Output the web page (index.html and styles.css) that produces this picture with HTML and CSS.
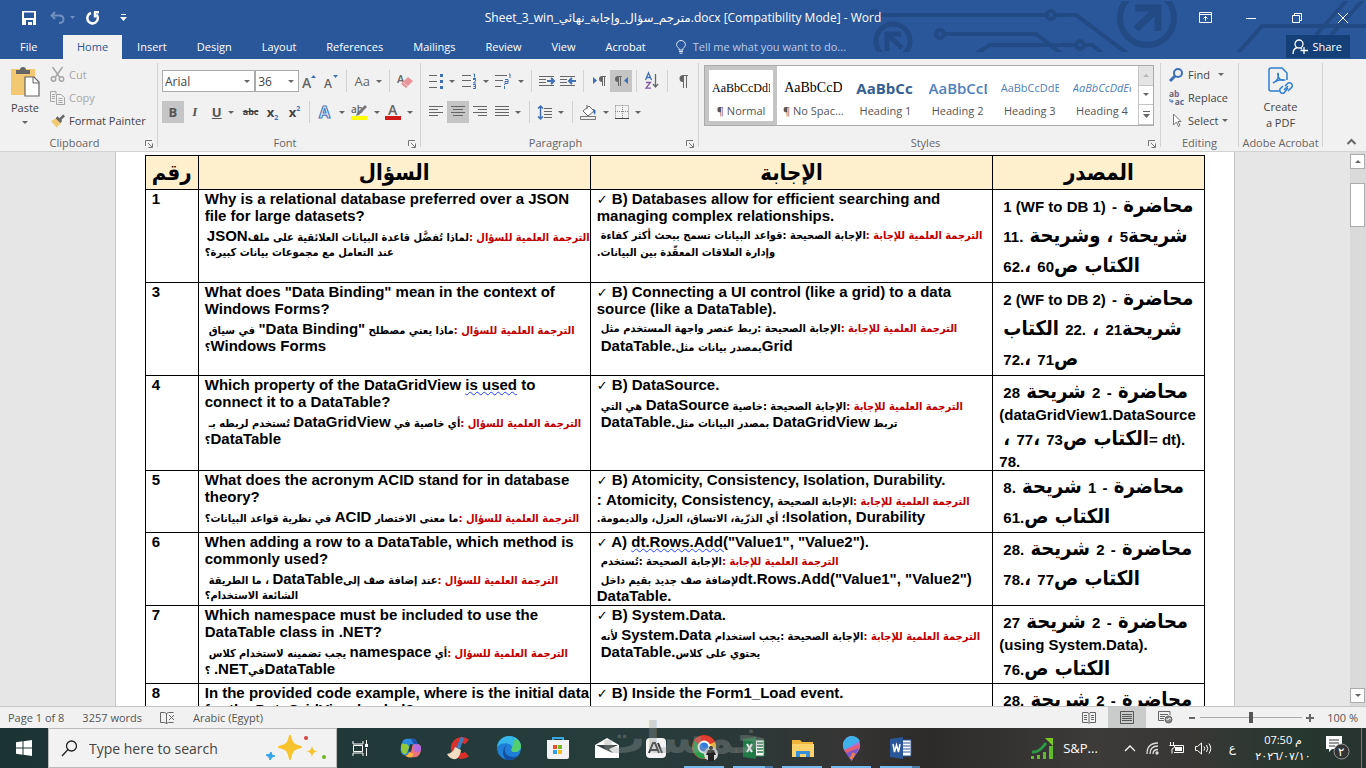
FILE: index.html
```html
<!DOCTYPE html>
<html lang="en">
<head>
<meta charset="utf-8">
<title>Word</title>
<link rel="stylesheet" href="styles.css">
</head>
<body>
<header class="top">
  <svg class="circuit" width="496" height="59" viewBox="870 0 496 59" fill="none" stroke="#224a85" stroke-width="4">
    <g clip-path="url(#band)">
      <circle cx="874" cy="15" r="4"/><path d="M878 15H1047M1055 15H1076L1128 54"/><circle cx="1051" cy="15" r="4"/>
      <circle cx="940" cy="34" r="4"/><path d="M944 34H1036L1062 54M974 55L990 45H1076"/><circle cx="1080" cy="45" r="4"/><path d="M1084 45H1092L1102 53"/>
      <circle cx="1147" cy="18" r="27" stroke-width="6"/><path d="M1135 8H1158V31M1157 9L1136 29" stroke-width="7"/>
      <circle cx="893" cy="41" r="17" stroke-width="5"/><path d="M887 51V34H901M887 34L902 48" stroke-width="5"/>
      <path d="M1238 53L1262 26H1366M1316 35L1347 0M1331 35L1363 0"/>
    </g>
    <clipPath id="band"><rect x="870" y="1" width="496" height="51"/></clipPath>
  </svg>
  <div class="titlebar">
    <div class="qat">
      <button aria-label="Save"><svg width="14" height="14" viewBox="0 0 14 14"><path d="M0 0h14v14H0z" fill="#fff"/><path d="M2 1.500h10V7H2zM4 9h7v5h-1v-3H6v3H4z" fill="#2a579a"/></svg></button>
      <button aria-label="Undo"><svg width="26" height="14" viewBox="0 0 26 14" fill="none" stroke="#6f8fc0" stroke-width="2"><path d="M5 1L1.500 4.500L5 8M2 4.500H9C15 4.500 15 12 9 12"/><path d="M20 5h5l-2.500 3z" fill="#6f8fc0" stroke="none"/></svg></button>
      <button aria-label="Redo"><svg width="14" height="14" viewBox="0 0 14 14" fill="none" stroke="#fff" stroke-width="2.500"><path d="M5 2A5.300 5.300 0 1 0 10.500 3.500"/><path d="M8 1.200h5M9 1v5.500"/></svg></button>
      <button aria-label="Customize"><svg width="7" height="8" viewBox="0 0 7 8" fill="#fff"><path d="M1 0h5v1H1zM0 3h7L3.500 7z"/></svg></button>
    </div>
    <h1>Sheet_3_win_مترجم_سؤال_وإجابة_نهائي.docx [Compatibility Mode] - Word</h1>
    <div class="winctl">
      <button aria-label="Ribbon options"><svg width="13" height="11" viewBox="0 0 13 11" fill="none" stroke="#fff"><path d="M.5.5h12v10H.5zM.5 2.500h12M6.500 9V4.500M4.500 6.500l2-2l2 2"/></svg></button>
      <button aria-label="Minimize"><svg width="10" height="10" viewBox="0 0 10 10" stroke="#fff"><path d="M0 5.500h10"/></svg></button>
      <button aria-label="Restore"><svg width="10" height="10" viewBox="0 0 10 10" fill="none" stroke="#fff"><path d="M.5 2.500h7v7h-7zM2.500 2V.5h7v7H8"/></svg></button>
      <button aria-label="Close"><svg width="10" height="10" viewBox="0 0 10 10" stroke="#fff"><path d="M0 0l10 10M10 0L0 10"/></svg></button>
    </div>
  </div>
  <nav class="tabs">
    <button class="file">File</button><button class="on">Home</button><button>Insert</button><button>Design</button><button>Layout</button><button>References</button><button>Mailings</button><button>Review</button><button>View</button><button>Acrobat</button>
    <button class="tell"><svg width="10" height="14" viewBox="0 0 10 14" fill="none" stroke="#dfe8f5"><path d="M3 10V8.500C1.500 7 .6 6 .6 4.600a4.400 4.100 0 0 1 8.800 0C9.400 6 8.500 7 7 8.500V10zM3 11.500h4M3.500 13.200h3"/></svg>Tell me what you want to do...</button>
    <button class="share"><svg width="16" height="16" viewBox="0 0 16 16" fill="none" stroke="#fff" stroke-width="1.300"><circle cx="7" cy="5" r="4"/><path d="M1 15c0-4 2-6 4.500-6.500M8.500 9L10 10M12 8v7M8.500 11.500H16"/></svg>Share</button>
  </nav>
</header>

<section class="ribbon">
  <div class="group g-clip">
    <div class="body">
      <button class="big"><svg width="30" height="32" viewBox="0 0 30 32"><path d="M1 3h24v26H1z" fill="#f3c873"/><path d="M6 8V4h4a3 3 0 0 1 6 0h4v4z" fill="#666"/><path d="M15 11h9l5 5v14H15z" fill="#fff" stroke="#666" stroke-width="1.200"/><path d="M23 11v6h6" fill="none" stroke="#666"/></svg>Paste<i class="arr"></i></button>
      <div class="stack">
        <button class="off"><svg width="14" height="15" viewBox="0 0 14 15" fill="none" stroke="#a6a6a6" stroke-width="1.500"><path d="M2 0l7 10M12 0L5 10"/><circle cx="3" cy="12" r="2.200"/><circle cx="11" cy="12" r="2.200"/></svg>Cut</button>
        <button class="off"><svg width="15" height="14" viewBox="0 0 15 14" fill="none" stroke="#a6a6a6"><path d="M6 3.500V.5H.5v10H5M2 3.500h3M2 5.500h3M2 7.500h3M6.500 3.500H11l3.500 3v7h-8zM8.500 7.500h4M8.500 9.500h4M8.500 11.500h4"/></svg>Copy</button>
        <button><svg width="16" height="14" viewBox="0 0 16 14"><path d="M1 7l6-3l5 5l-5 5z" fill="#f3c873"/><path d="M6 4l2-2l5 5l-2 2zM10 4l4-4l2 2l-4 4z" fill="#666"/></svg>Format Painter</button>
      </div>
    </div>
    <div class="label">Clipboard<svg class="launch" viewBox="0 0 8 8"><path d="M.5 6V.5H7M3 3l4 4M7.500 3.500v4h-4" /></svg></div>
  </div>

  <div class="group g-font">
    <div class="body rows">
      <div class="row">
        <span class="combo face"><select aria-label="Font"><option>Arial</option></select><i class="arr"></i></span><span class="combo size"><select aria-label="Font size"><option>36</option></select><i class="arr"></i></span>
        <button class="t" aria-label="Grow font"><svg width="15" height="15" viewBox="0 0 15 15"><text x="0" y="14" class="gl" font-size="14">A</text><path d="M9 4h5l-2.500-3z" fill="#3f6fb5"/></svg></button>
        <button class="t" aria-label="Shrink font"><svg width="15" height="15" viewBox="0 0 15 15"><text x="0" y="14" class="gl" font-size="12">A</text><path d="M9 1h5l-2.500 3z" fill="#3f6fb5"/></svg></button>
        <i class="sep"></i><button class="t dd txt">Aa<i class="arr"></i></button><i class="sep"></i>
        <button class="t" aria-label="Clear formatting"><svg width="16" height="16" viewBox="0 0 16 16"><text x="0" y="10" class="gl" font-size="11">A</text><path d="M4 11l7-7l5 4l-7 7z" fill="#e8929a"/><path d="M6 9l5 4.500" stroke="#f6d5d8"/></svg></button>
      </div>
      <div class="row">
        <button class="t act"><b>B</b></button><button class="t"><em>I</em></button><button class="t dd"><u>U</u><i class="arr"></i></button><button class="t strike">abc</button><button class="t sc">x<sub>2</sub></button><button class="t sc">x<sup>2</sup></button>
        <i class="sep"></i>
        <button class="t dd" aria-label="Text effects"><svg width="15" height="15" viewBox="0 0 15 15"><text x="1" y="13" font-family="Open Sans" font-weight="bold" font-size="16" fill="#fff" stroke="#4d7fc4" stroke-width="1.200">A</text></svg><i class="arr"></i></button>
        <button class="t dd" aria-label="Highlight"><svg width="17" height="16" viewBox="0 0 17 16"><text x="0" y="9" class="gl" font-size="10">ab</text><path d="M14 1l2 2l-8 8l-3 1l1-3z" fill="#777"/><path d="M0 12h16v4H0z" fill="#ff0"/></svg><i class="arr"></i></button>
        <button class="t dd" aria-label="Font color"><svg width="16" height="16" viewBox="0 0 16 16"><text x="3" y="11" class="gl" font-size="14">A</text><path d="M0 12h16v4H0z" fill="#d11a1a"/></svg><i class="arr"></i></button>
      </div>
    </div>
    <div class="label">Font<svg class="launch" viewBox="0 0 8 8"><path d="M.5 6V.5H7M3 3l4 4M7.500 3.500v4h-4" /></svg></div>
  </div>

  <div class="group g-para">
    <div class="body rows">
      <div class="row">
        <button class="t dd" aria-label="Bullets"><svg width="14" height="15" viewBox="0 0 14 15"><path d="M0 1.500h8M0 7.500h8M0 13.500h8" stroke="#666"/><path d="M11 0h3v3h-3zM11 6h3v3h-3zM11 12h3v3h-3z" fill="#3f6fb5"/></svg><i class="arr"></i></button>
        <button class="t dd" aria-label="Numbering"><svg width="15" height="16" viewBox="0 0 15 16"><path d="M0 2.500h9M0 7.500h9M0 13.500h9" stroke="#666"/><path d="M11.500 1h1v3.500M11 5.500h3M11 6.500h2.500v1.500l-2 2h2.500M11 11.500h2.500v4H11M11.500 13.500h2" fill="none" stroke="#3f6fb5"/></svg><i class="arr"></i></button>
        <button class="t dd" aria-label="Multilevel list"><svg width="17" height="16" viewBox="0 0 17 16"><path d="M0 2.500h12M0 7.500h8M0 13.500h6" stroke="#666"/><path d="M14 1h1v4M10 6.500h3v4h-3v-2h3M9.500 11v1M9.500 13v3" fill="none" stroke="#3f6fb5"/></svg><i class="arr"></i></button>
        <i class="sep"></i>
        <button class="t" aria-label="Decrease indent"><svg width="16" height="11" viewBox="0 0 16 11" fill="none" stroke="#666"><path d="M0 .5h15M0 3.500h7M0 6.500h7M0 9.500h15"/><path d="M8 5h7M12 2l3 3l-3 3" stroke="#3f6fb5" stroke-width="2"/></svg></button>
        <button class="t" aria-label="Increase indent"><svg width="16" height="11" viewBox="0 0 16 11" fill="none" stroke="#666"><path d="M0 .5h15M0 3.500h7M0 6.500h7M0 9.500h15"/><path d="M16 5H9M12 2L9 5l3 3" stroke="#3f6fb5" stroke-width="2"/></svg></button>
        <i class="sep"></i>
        <button class="t" aria-label="Left to right"><svg width="13" height="10" viewBox="0 0 13 10"><path d="M0 1v7l4-3.500z" fill="#3f6fb5"/><path d="M13 0v1h-1v9h-1V1h-1v9H9V6a3 3 0 0 1 0-6z" fill="#666"/></svg></button>
        <button class="t act" aria-label="Right to left"><svg width="13" height="10" viewBox="0 0 13 10"><path d="M13 1v7L9 4.500z" fill="#3f6fb5"/><path d="M7 0v1H6v9H5V1H4v9H3V6a3 3 0 0 1 0-6z" fill="#666"/></svg></button>
        <i class="sep"></i>
        <button class="t" aria-label="Sort"><svg width="14" height="16" viewBox="0 0 14 16" fill="none" stroke-width="1.300"><path d="M.5 7L3.500 0L6.500 7M1.500 4.500h4" stroke="#3f6fb5"/><path d="M1 9.500h4.500L1 15.200h5" stroke="#80599e"/><path d="M10.500 1v13M8 11l2.500 3l2.500-3" stroke="#666"/></svg></button>
        <i class="sep"></i>
        <button class="t" aria-label="Show marks"><svg width="10" height="13" viewBox="0 0 10 13" fill="#666"><path d="M10 0v1H9v12H8V1H6v12H5V7a3.500 3.500 0 0 1 0-7z"/></svg></button>
      </div>
      <div class="row">
        <button class="t" aria-label="Align left"><svg width="14" height="12" viewBox="0 0 14 12" stroke="#666"><path d="M0 .5h14M0 3.500h9M0 6.500h14M0 9.500h9"/></svg></button>
        <button class="t act" aria-label="Center"><svg width="14" height="12" viewBox="0 0 14 12" stroke="#666"><path d="M0 .5h14M2 3.500h10M0 6.500h14M2 9.500h10"/></svg></button>
        <button class="t" aria-label="Align right"><svg width="14" height="12" viewBox="0 0 14 12" stroke="#666"><path d="M0 .5h14M5 3.500h9M0 6.500h14M5 9.500h9"/></svg></button>
        <button class="t dd" aria-label="Justify"><svg width="14" height="12" viewBox="0 0 14 12" stroke="#666"><path d="M0 .5h14M0 3.500h14M0 6.500h14M0 9.500h14"/></svg><i class="arr"></i></button>
        <i class="sep"></i>
        <button class="t dd" aria-label="Line spacing"><svg width="14" height="15" viewBox="0 0 14 15" fill="none" stroke="#666"><path d="M6 3.500h8M6 6.500h8M6 9.500h8M6 12.500h8"/><path d="M2.500 1v13M0 3.500L2.500 1L5 3.500M0 11.500L2.500 14L5 11.500" stroke="#3f6fb5" stroke-width="1.500"/></svg><i class="arr"></i></button>
        <i class="sep"></i>
        <button class="t dd" aria-label="Shading"><svg width="17" height="16" viewBox="0 0 17 16"><path d="M3 7l6-5l5 5l-6 5zM7 5V1" fill="#fff" stroke="#666"/><path d="M13 5c3 0 3 3 2 6c-1-2-2-2-2-6z" fill="#3f6fb5"/><path d="M.5 12.500h15v3H.5z" fill="#eee" stroke="#777"/></svg><i class="arr"></i></button>
        <button class="t dd" aria-label="Borders"><svg width="14" height="14" viewBox="0 0 14 14" fill="none" stroke="#888" stroke-dasharray="1 1"><path d="M.5.5h13v13M.5.5v13M7.500 0v13M0 6.500h13"/><path d="M0 13.500h14" stroke="#444" stroke-dasharray="none"/></svg><i class="arr"></i></button>
      </div>
    </div>
    <div class="label">Paragraph<svg class="launch" viewBox="0 0 8 8"><path d="M.5 6V.5H7M3 3l4 4M7.500 3.500v4h-4" /></svg></div>
  </div>

  <div class="group g-styles">
    <div class="gallery">
      <button class="style sel"><span class="pv serif">AaBbCcDdI</span><span>¶ Normal</span></button>
      <button class="style"><span class="pv serif lg">AaBbCcD</span><span>¶ No Spac...</span></button>
      <button class="style"><span class="pv h1">AaBbCc</span><span>Heading 1</span></button>
      <button class="style"><span class="pv h2">AaBbCcD</span><span>Heading 2</span></button>
      <button class="style"><span class="pv h3">AaBbCcDdEe</span><span>Heading 3</span></button>
      <button class="style"><span class="pv h3 it">AaBbCcDdEe</span><span>Heading 4</span></button>
      <div class="scroller"><button class="off" aria-label="Up"><i class="arr up"></i></button><button aria-label="Down"><i class="arr"></i></button><button aria-label="More"><svg width="7" height="7" viewBox="0 0 7 7" fill="#666"><path d="M0 0h7v1H0zM0 3h7L3.500 7z"/></svg></button></div>
    </div>
    <div class="label">Styles<svg class="launch" viewBox="0 0 8 8"><path d="M.5 6V.5H7M3 3l4 4M7.500 3.500v4h-4" /></svg></div>
  </div>

  <div class="group g-edit">
    <div class="stack">
      <button><svg width="15" height="14" viewBox="0 0 15 14" fill="none" stroke="#3f6fb5" stroke-width="2"><circle cx="9" cy="5" r="4"/><path d="M6 8l-5 5" stroke-width="3"/></svg>Find<i class="arr wide"></i></button>
      <button><svg width="16" height="16" viewBox="0 0 16 16" font-family="Open Sans" font-weight="bold" font-size="9"><text x="0" y="7" fill="#666">a<tspan fill="#80599e">b</tspan></text><text x="6" y="15" fill="#666">a<tspan fill="#3f6fb5">c</tspan></text><path d="M1 9v2.500h3M2.500 10l2 1.500l-2 2" fill="none" stroke="#3f6fb5"/></svg>Replace</button>
      <button><svg width="15" height="15" viewBox="0 0 15 15" fill="#fff" stroke="#777"><path d="M4.500 1v11l3-3l2 4.500l1.500-1L9 8.500h3z"/></svg>Select<i class="arr"></i></button>
    </div>
    <div class="label">Editing</div>
  </div>

  <div class="group g-acro">
    <button class="big"><svg width="26" height="30" viewBox="0 0 26 30" fill="none" stroke="#2f7fd1" stroke-width="1.500"><path d="M11 24H3a2 2 0 0 1-2-2V3a2 2 0 0 1 2-2h11l5 5v7M5 16c4-2 6-6 5-10c-1 5 3 8 6 7c-3-1-8 1-11 3z"/><path d="M17 19l3-3a3 3 0 0 1 4 4l-4 4M20 21l-4 5a3 3 0 0 1-4-4l3-3M16 23l4-4"/></svg>Create<br>a PDF</button>
    <div class="label">Adobe Acrobat</div>
  </div>
  <button class="collapse" aria-label="Collapse ribbon"><svg width="9" height="6" viewBox="0 0 9 6" fill="none" stroke="#666" stroke-width="2"><path d="M.5 5l4-4l4 4"/></svg></button>
</section>

<main class="desk">
  <div class="canvas">
  <div class="page">
    <table>
      <colgroup><col class="c1"><col class="c2"><col class="c3"><col class="c4"></colgroup>
      <thead><tr><th>رقم</th><th>السؤال</th><th>الإجابة</th><th>المصدر</th></tr></thead>
      <tbody>
      <tr class="r93"><td>1</td>
        <td>Why is a relational database preferred over a JSON<br>file for large datasets?
          <p class="ar in"><span>الترجمة العلمية للسؤال :</span>لماذا تُفضَّل قاعدة البيانات العلائقية على ملف<b dir="ltr">JSON</b></p><p class="ar">عند التعامل مع مجموعات بيانات كبيرة؟</p></td>
        <td><i class="ck">✓</i> B) Databases allow for efficient searching and<br>managing complex relationships.
          <p class="ar in"><span>الترجمة العلمية للإجابة :</span>الإجابة الصحيحة :قواعد البيانات تسمح ببحث أكثر كفاءة</p><p class="ar">وإدارة العلاقات المعقّدة بين البيانات.</p></td>
        <td class="src"><p>محاضرة <b>-</b> <b dir="ltr">1 (WF to DB 1)</b></p><p>شريحة<b>5</b> ، وشريحة <b dir="ltr">11.</b></p><p>الكتاب ص<b>60</b> ،<b dir="ltr">62.</b></p></td></tr>
      <tr class="r93"><td>3</td>
        <td>What does "Data Binding" mean in the context of<br>Windows Forms?
          <p class="ar in"><span>الترجمة العلمية للسؤال :</span>ماذا يعني مصطلح <b dir="ltr">"Data Binding"</b> في سياق</p><p class="ar"><b dir="ltr">Windows Forms</b>؟</p></td>
        <td><i class="ck">✓</i> B) Connecting a UI control (like a grid) to a data<br>source (like a DataTable).
          <p class="ar in"><span>الترجمة العلمية للإجابة :</span>الإجابة الصحيحة :ربط عنصر واجهة المستخدم مثل</p><p class="ar in"><b dir="ltr">Grid</b>بمصدر بيانات مثل<b dir="ltr">DataTable.</b></p></td>
        <td class="src"><p>محاضرة <b>-</b> <b dir="ltr">2 (WF to DB 2)</b></p><p>شريحة<b>21</b> ، <b dir="ltr">22.</b> الكتاب</p><p>ص<b>71</b> ،<b dir="ltr">72.</b></p></td></tr>
      <tr class="r95"><td>4</td>
        <td>Which property of the DataGridView <span class="wavy">is used</span> to<br>connect it to a DataTable?
          <p class="ar in"><span>الترجمة العلمية للسؤال :</span>أي خاصية في <b dir="ltr">DataGridView</b> تُستخدم لربطه بـ</p><p class="ar"><b dir="ltr">DataTable</b>؟</p></td>
        <td><i class="ck">✓</i> B) DataSource.
          <p class="ar in"><span>الترجمة العلمية للإجابة :</span>الإجابة الصحيحة :خاصية <b dir="ltr">DataSource</b> هي التي</p><p class="ar in">تربط <b dir="ltr">DataGridView</b> بمصدر البيانات مثل<b dir="ltr">DataTable.</b></p></td>
        <td class="src"><p>محاضرة <b>-</b> <b>2</b> شريحة <b>28</b></p>(dataGridView1.DataSource<p><b dir="ltr">= dt).</b>الكتاب ص<b>73</b> ،<b>77</b> ،</p>78.</td></tr>
      <tr class="r62"><td>5</td>
        <td>What does the acronym ACID stand for in database<br>theory?
          <p class="ar"><span>الترجمة العلمية للسؤال :</span>ما معنى الاختصار <b dir="ltr">ACID</b> في نظرية قواعد البيانات؟</p></td>
        <td><i class="ck">✓</i> B) Atomicity, Consistency, Isolation, Durability.
          <p class="ar"><span>الترجمة العلمية للإجابة :</span>الإجابة الصحيحة <b dir="ltr">: Atomicity, Consistency,</b></p><p class="ar"><b dir="ltr">Isolation, Durability</b>؛ أي الذرّية، الاتساق، العزل، والديمومة.</p></td>
        <td class="src"><p>محاضرة <b>-</b> <b>1</b> شريحة <b dir="ltr">8.</b></p><p>الكتاب ص<b dir="ltr">61.</b></p></td></tr>
      <tr class="r73"><td>6</td>
        <td>When adding a row to a DataTable, which method is<br>commonly used?
          <p class="ar in"><span>الترجمة العلمية للسؤال :</span>عند إضافة صف إلى<b dir="ltr">DataTable</b> ، ما الطريقة</p><p class="ar">الشائعة الاستخدام؟</p></td>
        <td><i class="ck">✓</i> A) <span class="wavy">dt.Rows.Add(</span>"Value1", "Value2").
          <p class="ar in"><span>الترجمة العلمية للإجابة :</span>الإجابة الصحيحة :تُستخدم</p><p class="ar in"><b dir="ltr">dt.Rows.Add("Value1", "Value2")</b>لإضافة صف جديد بقيم داخل</p>DataTable.</td>
        <td class="src"><p>محاضرة <b>-</b> <b>2</b> شريحة <b dir="ltr">28.</b></p><p>الكتاب ص<b>77</b> ،<b dir="ltr">78.</b></p></td></tr>
      <tr class="r78"><td>7</td>
        <td>Which namespace must be included to use the<br>DataTable class in .NET?
          <p class="ar in"><span>الترجمة العلمية للسؤال :</span>أي <b dir="ltr">namespace</b> يجب تضمينه لاستخدام كلاس</p><p class="ar"><b dir="ltr">DataTable</b>في<b dir="ltr">.NET</b> ؟</p></td>
        <td><i class="ck">✓</i> B) System.Data.
          <p class="ar in"><span>الترجمة العلمية للإجابة :</span>الإجابة الصحيحة :يجب استخدام <b dir="ltr">System.Data</b> لأنه</p><p class="ar in">يحتوي على كلاس<b dir="ltr">DataTable.</b></p></td>
        <td class="src"><p>محاضرة <b>-</b> <b>2</b> شريحة <b>27</b></p>(using System.Data).<p>الكتاب ص<b dir="ltr">76.</b></p></td></tr>
      <tr class="r93"><td>8</td>
        <td>In the provided code example, where is the initial data<br>for the DataGridView loaded?</td>
        <td><i class="ck">✓</i> B) Inside the Form1_Load event.</td>
        <td class="src"><p>محاضرة <b>-</b> <b>2</b> شريحة <b dir="ltr">28.</b></p></td></tr>
      </tbody>
    </table>
  </div>
  </div>
  <div class="vbar"><button aria-label="Scroll up"><i class="arr up"></i></button><div class="thumb"></div><button aria-label="Scroll down"><i class="arr"></i></button></div>
</main>

<footer class="status">
  <span>Page 1 of 8</span><span>3257 words</span>
  <svg width="15" height="13" viewBox="0 0 15 13" fill="none" stroke="#666"><path d="M.5 1.500h4l2 1v10l-2-1h-4zM6.500 2.500l2-1h5M6.500 12.500l2-1h5M9 4l5 5M14 4L9 9" /></svg>
  <span>Arabic (Egypt)</span>
  <div class="view">
    <button aria-label="Read mode"><svg width="14" height="12" viewBox="0 0 14 12" fill="none" stroke="#666"><path d="M.5.5H6l1 1l1-1h5.500v10H8l-1 1l-1-1H.5zM7 1v10M2 3.500h3M2 5.500h3M2 7.500h3M9 3.500h3M9 5.500h3M9 7.500h3"/></svg></button>
    <button class="on" aria-label="Print layout"><svg width="14" height="13" viewBox="0 0 14 13" fill="none" stroke="#555"><path d="M.5.500h13v12H.5zM2 3.500h10M2 5.500h10M2 7.500h10M2 9.500h10"/></svg></button>
    <button aria-label="Web layout"><svg width="15" height="13" viewBox="0 0 15 13" fill="none" stroke="#666"><path d="M12 4V.5H.5v9H6M2 3.500h8M2 5.500h5M2 7.500h4"/><circle cx="10.500" cy="8.500" r="3.500" fill="#888"/><path d="M8 8l2 1l1-2l2 1" stroke="#eee"/></svg></button>
  </div>
  <button class="zb" aria-label="Zoom out"><svg width="6" height="8"><path d="M0 4h6" stroke="#666" stroke-width="2"/></svg></button>
  <input type="range" min="10" max="190" value="100" aria-label="Zoom">
  <button class="zb" aria-label="Zoom in"><svg width="8" height="8"><path d="M0 4h8M4 0v8" stroke="#666" stroke-width="2"/></svg></button>
  <span class="pct">100 %</span>
</footer>

<footer class="taskbar">
  <button class="start" aria-label="Start"><svg width="16" height="16" viewBox="0 0 16 16" fill="#fff"><path d="M0 2.200L6.500 1.300V7.500H0zM7.500 1.200L16 0V7.500H7.500zM0 8.500H6.500V14.700L0 13.800zM7.500 8.500H16V16L7.500 14.800z"/></svg></button>
  <label class="search"><svg width="17" height="17" viewBox="0 0 17 17" fill="none" stroke="#222" stroke-width="1.300"><circle cx="10.500" cy="6" r="5"/><path d="M7 9.500L1 16"/></svg><input type="text" placeholder="Type here to search" aria-label="Search">
    <svg width="62" height="26" viewBox="0 0 62 26"><path d="M24 1c2 8 3 9 11 11c-8 2-9 3-11 12c-2-9-3-10-11-12c8-2 9-3 11-11z" fill="#f7c32e" stroke="#f7c32e" stroke-width="2" stroke-linejoin="round"/><path d="M46 11c1 4 2 5 6 5c-4 1-5 2-6 6c-1-4-2-5-6-6c4 0 5-1 6-5z" fill="#f7c32e"/><path d="M5 17l1 3l3 1l-3 1l-2 3l-1-3l-3-2l4-1z" fill="#36a3e8" stroke="#36a3e8"/><circle cx="40" cy="3" r="2" fill="#d9433b"/><circle cx="58" cy="22" r="2" fill="#6cb51a"/></svg></label>
  <button class="tv" aria-label="Task view"><svg width="17" height="17" viewBox="0 0 17 17" fill="none" stroke="#fff"><path d="M1 1v3h10V1M1 16v-3h10v3M1.500 5.500h9v6h-9zM14.500 0v4M14.500 8v8"/><path d="M13 4h3v3h-3z" fill="#fff" stroke="none"/></svg></button>
  <button aria-label="Copilot"><svg width="22" height="22" viewBox="0 0 24 24"><path d="M8 2h7q2 0 3 3l1 3h-4q-2 0-3 3l-2 6q-1 3-4 3q-4 0-5-4q-1-3 1-9q1-5 6-5z" fill="#2a8be0"/><path d="M1 11q0-3 1-4l6 1l2 3l-2 5q-1 3-3 3q-4-1-4-8z" fill="#8fc93c"/><path d="M14 2q3 0 4 3l1 3h-4l-3-6z" fill="#2051b8"/><path d="M16 22H9q-2 0-3-2q3 0 4-3l2-6q1-3 3-3h4q4 0 4 5q-1 9-7 9z" fill="#e8737c"/><path d="M15 8h4q4 0 4 5l-1 3h-6z" fill="#b46be0"/><path d="M6 20q3 0 4-3l5 1l-2 4H9q-2 0-3-2z" fill="#f4b53a"/><path d="M11 8h3l-2 8H9z" fill="#25383a"/></svg></button>
  <button aria-label="Cleaner"><svg width="25" height="25" viewBox="0 0 25 25"><path d="M20 6A8 8 0 1 0 20 18" fill="none" stroke="#d9302c" stroke-width="6"/><path d="M14 1l3 1l-4 11l-4-1z" fill="#3c7fc4"/><path d="M8 11l6 3q-1 7-5 9q-6 1-9-5q6-1 8-7z" fill="#f0dcc0"/></svg></button>
  <button aria-label="Edge"><svg width="24" height="24" viewBox="0 0 24 24"><circle cx="12" cy="12" r="12" fill="#1f7fd6"/><path d="M0 11C1 3 8 0 12 0c8 0 12 6 12 10c0 4-3 6-6 6c-4 0-4-2-3-4c1-4-9-8-15-1z" fill="#36b6e8"/><path d="M18 2c4 2 6 6 6 8c0 4-3 6-6 6c-4 0-4-2-3-4q2-5 3-10z" fill="#54cf6f"/><path d="M10 9c-5 5-1 12 6 12q4 0 6-3q-4 6-10 6C5 24 4 12 10 9z" fill="#124f9e"/></svg></button>
  <button aria-label="Store"><svg width="24" height="24" viewBox="0 0 24 24"><path d="M7 5V2h10v3" fill="none" stroke="#35a8e0" stroke-width="2"/><path d="M1 4h22v17q0 2-2 2H3q-2 0-2-2z" fill="#f2f2f2"/><path d="M7 9h4v4H7z" fill="#e74f2f"/><path d="M12 9h4v4h-4z" fill="#79b928"/><path d="M7 14h4v4H7z" fill="#2ba3e0"/><path d="M12 14h4v4h-4z" fill="#f5b921"/></svg></button>
  <button aria-label="Mail"><svg width="24" height="20" viewBox="0 0 24 20"><path d="M0 7l12-7l12 7v13H0z" fill="#fff"/><path d="M1 7h22l-9 4l4 4L9 11z" fill="#333d3d"/></svg></button>
  <button aria-label="AI"><svg width="20" height="20" viewBox="0 0 20 20"><rect width="20" height="20" rx="4" fill="#f4f4f4"/><path d="M3 15L7 5h2l4 10M5 12h6M12 5l4 10" fill="none" stroke="#333" stroke-width="2"/></svg></button>
  <button class="run" aria-label="Chrome"><svg width="26" height="26" viewBox="0 0 26 26"><circle cx="12" cy="12" r="12" fill="#e33b2e"/><path d="M12 12L23 7a12 12 0 0 1-10 17z" fill="#fbc02d"/><path d="M12 12L2 6a12 12 0 0 0 10 18l5-9z" fill="#2a9d4b"/><circle cx="12" cy="12" r="5.500" fill="#2f7de0" stroke="#fff" stroke-width="2"/><circle cx="19" cy="19" r="7" fill="#d9d9d9"/><circle cx="19" cy="13" r="2" fill="#222"/><path d="M16 15h6l2 5h-2v6h-6v-6h-2z" fill="#222"/></svg></button>
  <button class="run multi" aria-label="Excel"><svg width="22" height="22" viewBox="0 0 22 22"><path d="M11 3h10v16H11z" fill="#fff" stroke="#2b7a48"/><path d="M14 6h6M14 9h6M14 12h6M14 15h6" stroke="#2b7a48" stroke-width="1.500"/><path d="M0 2l13-2v22L0 20z" fill="#1f7a45"/><path d="M4 7l5 8M9 7l-5 8" stroke="#fff" stroke-width="2"/></svg></button>
  <button class="run" aria-label="Explorer"><svg width="22" height="19" viewBox="0 0 22 19"><path d="M0 1h8l2 2h11v15H0z" fill="#f0b63a"/><path d="M0 5h22v13H0z" fill="#fbd36a"/><path d="M4 18v-6h14v6h-4v-3H8v3z" fill="#3b8fd9"/></svg></button>
  <button class="run" aria-label="Maps"><svg width="19" height="25" viewBox="0 0 19 25"><path d="M9.500 25L2 14A9.500 9.500 0 0 1 9.500 0A9.500 9.500 0 0 1 17 14z" fill="#a875e0"/><path d="M1 7Q4 0 9.500 0Q15 0 18 5L2 14z" fill="#3fb2ea"/><path d="M2 14L18 8l-1 5L6 19z" fill="#e35f74"/><path d="M4 17L17 12L9.500 25z" fill="#7b56c9"/><path d="M9 23l3-6" stroke="#ef7e4a" stroke-width="3"/></svg></button>
  <button class="run multi" aria-label="Word"><svg width="22" height="22" viewBox="0 0 22 22"><path d="M11 3h10v16H11z" fill="#fff" stroke="#2a579a"/><path d="M13 6h7M13 9h7M13 12h7M13 15h7" stroke="#2a579a"/><path d="M0 2l13-2v22L0 20z" fill="#2a579a"/><path d="M3 7l1.500 8L6.500 8l2 7L10 7" fill="none" stroke="#fff" stroke-width="1.500"/></svg></button>
  <div class="tray">
    <button class="stock"><svg width="23" height="23" viewBox="0 0 23 23"><path d="M1 15q7 1 14-9" fill="none" stroke="#2c9a45" stroke-width="3"/><path d="M14 1h8v8z" fill="#7ac71e"/><path d="M0 19h3v3H0zM6 18h3v4H6zM12 15h3v7h-3zM18 9h4v13h-4z" fill="#62bb2b"/></svg>S&amp;P...</button>
    <svg width="12" height="7" viewBox="0 0 12 7" fill="none" stroke="#fff" stroke-width="1.300"><path d="M1 6l5-5l5 5"/></svg>
    <svg width="13" height="13" viewBox="0 0 13 13" fill="none" stroke="#ddd" stroke-width="1.300"><path d="M1 12Q1 1 12 1M4 12Q4 4 12 4M7 12Q7 7.500 12 7.500"/><circle cx="11" cy="11" r="1" fill="#ddd"/></svg>
    <svg width="16" height="12" viewBox="0 0 16 12" fill="none" stroke="#fff"><path d="M5 3.500h9.500v7h-9.500M1.500 0v3M4.500 0v3M.5 3.500h5v2l-2.500 1.500v4.500"/><path d="M6 5h7v4H6z" fill="#fff" stroke="none"/></svg>
    <svg width="17" height="13" viewBox="0 0 17 13" fill="none" stroke="#fff"><path d="M.5 4.500h2l4-3.500v11l-4-3.500h-2zM9 4.500q1.500 2 0 4M11.500 3q2.500 3.500 0 7M14 1.500q3.500 5 0 10"/></svg>
    <span class="lang">ع</span>
    <time><span>07:50 م</span><span>٢٠٢٦/٠٧/١٠</span></time>
    <button class="note" aria-label="Notifications"><svg width="25" height="24" viewBox="0 0 25 24"><path d="M0 0h16v13H6l-3 3v-3H0z" fill="#fff"/><path d="M3 4h10M3 7h10M3 10h6" stroke="#333"/><circle cx="15.500" cy="15.500" r="7.500" fill="#333" stroke="#999"/><text x="12" y="20" font-family="DejaVu Sans" font-size="12" fill="#fff">٢</text></svg></button>
    <i class="edge"></i>
  </div>
  <div class="mark" aria-hidden="true">خمسات</div>
</footer>
</body>
</html>
```
FILE: styles.css
```css
* { box-sizing: border-box; }
body {
  margin: 0; height: 100vh; overflow: hidden;
  display: grid; grid-template-rows: auto auto 1fr auto auto; grid-template-columns: minmax(0, 1fr);
  font: 11px/16px "Open Sans", "DejaVu Sans", sans-serif; color: #444;
}
button { border: 0; padding: 0; margin: 0; background: none; font: inherit; color: inherit; display: flex; align-items: center; white-space: nowrap; }
h1, p { margin: 0; }
svg { flex: none; overflow: visible; }

/* title bar and tabs */
.top { position: relative; background: #2a579a; color: #fff; }
.circuit { position: absolute; right: 0; top: 0; }
.titlebar, .tabs { position: relative; }
.titlebar { display: grid; grid-template-columns: 1fr auto 1fr; height: 35px; align-items: center; }
.titlebar h1 { font-size: 12px; font-weight: 400; }
.qat { display: flex; align-items: center; gap: 14px; padding-left: 22px; height: 30px; }
.qat button:nth-child(3) { margin-left: -4px; }
.qat button:nth-child(4) { margin-left: 6px; }
.winctl { display: flex; justify-content: flex-end; height: 30px; }
.winctl button { width: 46px; justify-content: center; }
.tabs { display: flex; height: 24px; }
.tabs button { padding: 0 15px; }
.tabs .file { width: 63px; padding: 0 20px; }
.tabs .on { background: #f1f1f1; color: #2a579a; padding: 0 14px; }
.tabs .tell { gap: 7px; color: #b8cbe8; }
.tabs .share { margin: 0 16px 1px auto; padding: 0 8px 0 6px; gap: 4px; background: #143f77; }

/* ribbon */
.ribbon { display: flex; height: 93px; padding: 4px 0; background: #f1f1f1; border-bottom: 1px solid #d2d2d2; }
.group { display: flex; flex-direction: column; border-right: 1px solid #d2d2d2; padding: 0 4px; flex: none; }
.g-clip { width: 158px; }
.g-font { width: 263px; }
.g-para { width: 278px; }
.g-styles { flex: 1 1 0; min-width: 0; }
.g-edit { width: 78px; }
.g-acro { width: 84px; }
.label { position: relative; margin: auto 0 -4px; height: 16px; display: flex; justify-content: center; color: #666; white-space: nowrap; padding-right: 8px; }
.g-edit .label, .g-acro .label { padding: 0; }
.launch { position: absolute; right: 0; top: 5px; width: 8px; height: 8px; fill: none; stroke: #777; }
.arr { flex: none; width: 0; height: 0; border: 3px solid transparent; border-top-color: #666; border-bottom: 0; }
.arr.up { border-top: 0; border-bottom: 3px solid #666; }
.arr.wide { margin-left: 4px; }
.body { display: flex; }
.big { flex-direction: column; width: 42px; padding-top: 3px; color: #444; }
.big .arr { margin-top: 5px; }
.g-clip .big svg { margin-bottom: 2px; }
.stack { display: flex; flex-direction: column; padding-left: 4px; }
.stack button { height: 23px; gap: 4px; }
.stack svg { width: 15px; }
.off { color: #a6a6a6; }
.rows { flex-direction: column; gap: 9px; padding-top: 7px; }
.row { display: flex; height: 22px; }
.t { width: 22px; height: 22px; justify-content: center; }
.t.dd { width: 34px; gap: 6px; }
.act { background: #c5c5c5; }
.sep { width: 1px; margin: 0 4px; background: #d2d2d2; }
.gl { font-family: "Open Sans", sans-serif; font-weight: 600; fill: #666; }
.txt { font-size: 13px; color: #666; }
.t b, .t em, .t u { font-size: 13px; font-weight: 700; color: #555; }
.t em { font-family: "Liberation Serif", serif; }
.strike { text-decoration: line-through; font-weight: 700; font-size: 9px; }
.sc { font-weight: 700; font-size: 13px; }
.sc sub, .sc sup { font-size: 7px; line-height: 7px; color: #3f6fb5; }
.sc sub { align-self: flex-end; padding-bottom: 2px; }
.sc sup { align-self: flex-start; padding-top: 4px; }
.combo { position: relative; display: block; }
.combo select { appearance: none; width: 100%; height: 22px; padding: 0 2px; border: 1px solid #ababab; border-radius: 0; background: #fff; font: 12px "Open Sans", sans-serif; color: #444; }
.combo .arr { position: absolute; right: 5px; top: 10px; }
.face { width: 94px; }
.size { width: 44px; }

.gallery { display: flex; height: 61px; margin: 2px 2px 0 1px; border: 1px solid #ababab; background: #fff; overflow: hidden; }
.style { flex: 1 1 0; min-width: 0; flex-direction: column; justify-content: space-between; padding: 8px 3px 2px; border: 4px solid transparent; color: #555; }
.style.sel { border-color: #c5c5c5; }
.pv { width: 100%; overflow: hidden; line-height: 20px; text-align: left; }
.serif { font-family: "Liberation Serif", serif; font-size: 12px; color: #000; }
.serif.lg { font-size: 14px; }
.h1, .h2 { font-size: 15px; font-weight: 700; color: #365f91; }
.h2 { color: #4f81bd; font-weight: 600; }
.h3 { color: #4f81bd; }
.it { font-style: italic; }
.scroller { width: 15px; flex: none; display: grid; grid-template-rows: 1fr 1fr 1fr; border-left: 1px solid #c5c5c5; }
.scroller button { justify-content: center; border-bottom: 1px solid #c5c5c5; }
.scroller .off { background: #e4e4e4; }
.scroller .off .arr { border-bottom-color: #b5b5b5; }
.g-acro .big { width: 100%; padding-top: 4px; display: block; text-align: center; }
.g-acro .big svg { display: block; margin: 0 auto 2px; }
.collapse { margin-left: auto; padding: 0 10px 2px 24px; align-items: flex-end; }

/* document */
.desk { display: flex; min-height: 0; overflow: hidden; background: #e6e6e6; }
.canvas { flex: 1; min-width: 0; }
.page { width: 83%; min-height: 100%; margin: 0 auto; padding: 3px 29px; background: #fff; border: solid #c6c6c6; border-width: 0 1px; }
table { width: 100%; border-collapse: collapse; table-layout: fixed; font: bold 15px/17px "Liberation Sans", "DejaVu Sans", sans-serif; color: #000; }
.c1 { width: 5%; }
.c2 { width: 37%; }
.c3 { width: 38%; }
.c4 { width: 20%; }
th, td { border: 1px solid #000; padding: 0 0 0 6px; vertical-align: top; text-align: left; white-space: nowrap; }
thead tr { height: 34px; }
th { padding: 0; vertical-align: middle; text-align: center; background: #fff0cd; font: bold 22px/30px "DejaVu Sans Condensed", "DejaVu Sans", sans-serif; }
.r93 { height: 93px; }
.r95 { height: 95px; }
.r62 { height: 62px; }
.r73 { height: 73px; }
.r78 { height: 78px; }
.ck { font: bold 13px/0 "DejaVu Sans", sans-serif; }
.ar { direction: rtl; text-align: left; height: 17px; font: bold 11px/17px "DejaVu Sans Condensed", "DejaVu Sans", sans-serif; }
.ar:first-of-type { margin-top: 3px; }
.ar.in { padding-left: 4px; }
.ar span { color: #c00000; }
td b { font: bold 15px/17px "Liberation Sans", sans-serif; }
.src p { direction: rtl; text-align: left; height: 30px; padding-left: 4px; font: bold 20px/30px "DejaVu Sans Condensed", "DejaVu Sans", sans-serif; }
.wavy { text-decoration: underline wavy #1f3fff 1px; }
.vbar { width: 16px; display: flex; flex-direction: column; background: #dadada; padding: 2px 1px 3px 0; }
.vbar button { height: 15px; justify-content: center; background: #fff; border: 1px solid #ababab; }
.thumb { height: 44px; margin: 14px 0 auto; background: #fff; border: 1px solid #ababab; }

/* status bar */
.status { position: relative; display: flex; align-items: center; height: 22px; padding: 0 8px; background: #f1f1f1; border-top: 1px solid #c6c6c6; color: #555; }
.status > span, .status > svg { margin-right: 18px; }
.view { display: flex; margin-left: auto; align-self: stretch; }
.view button { width: 38px; justify-content: center; }
.view .on { background: #cacccb; }
.zb { width: 16px; justify-content: center; }
.status input { appearance: none; width: 102px; height: 12px; margin: 0; background: linear-gradient(#aaa, #aaa) center / 100% 1px no-repeat; }
.status input::-webkit-slider-thumb { appearance: none; width: 4px; height: 11px; background: #555; }
.status .pct { margin: 0 0 0 9px; }

/* taskbar */
.taskbar { position: relative; display: flex; height: 40px; color: #fff; background: linear-gradient(90deg, #1c3334 0, #263d3c 45%, #2b3837 55%, #363534 62%, #2d2b2a 68%, #3c3b39 80%, #393735 87%, #263830 95%, #28332f 100%); }
.taskbar > button { width: 49px; flex: none; justify-content: center; }
.taskbar > .start { width: 48px; }
.taskbar > .tv { padding-right: 2px; }
.search { flex: 0 0 288px; display: flex; align-items: center; padding: 0 8px 0 12px; background: #f2f2f2; border: 1px solid #bbb; }
.search input { flex: 1; min-width: 0; border: 0; padding: 0 0 0 11px; background: none; font: 14px "Open Sans", sans-serif; }
.search input::placeholder { color: #444; opacity: 1; }
.run { background: linear-gradient(#76b9ed, #76b9ed) 4px 100% / 40px 2px no-repeat; }
.multi { background: linear-gradient(90deg, #76b9ed 32px, #4a79a8 32px) 4px 100% / 40px 2px no-repeat; }
.tray { margin-left: auto; display: flex; align-items: center; gap: 10px; }
.stock { gap: 9px; font-size: 13px; margin-right: 16px; }
.lang { font-size: 12px; margin: 0 8px 0 7px; }
time { display: flex; flex-direction: column; align-items: center; width: 58px; white-space: nowrap; }
.note { padding-left: 4px; }
.edge { width: 1px; align-self: stretch; margin-right: 4px; background: #777; }
.mark { position: absolute; left: 44%; bottom: 8px; font: bold 44px/44px "DejaVu Sans", sans-serif; color: rgba(150, 155, 155, 0.35); pointer-events: none; }
```
